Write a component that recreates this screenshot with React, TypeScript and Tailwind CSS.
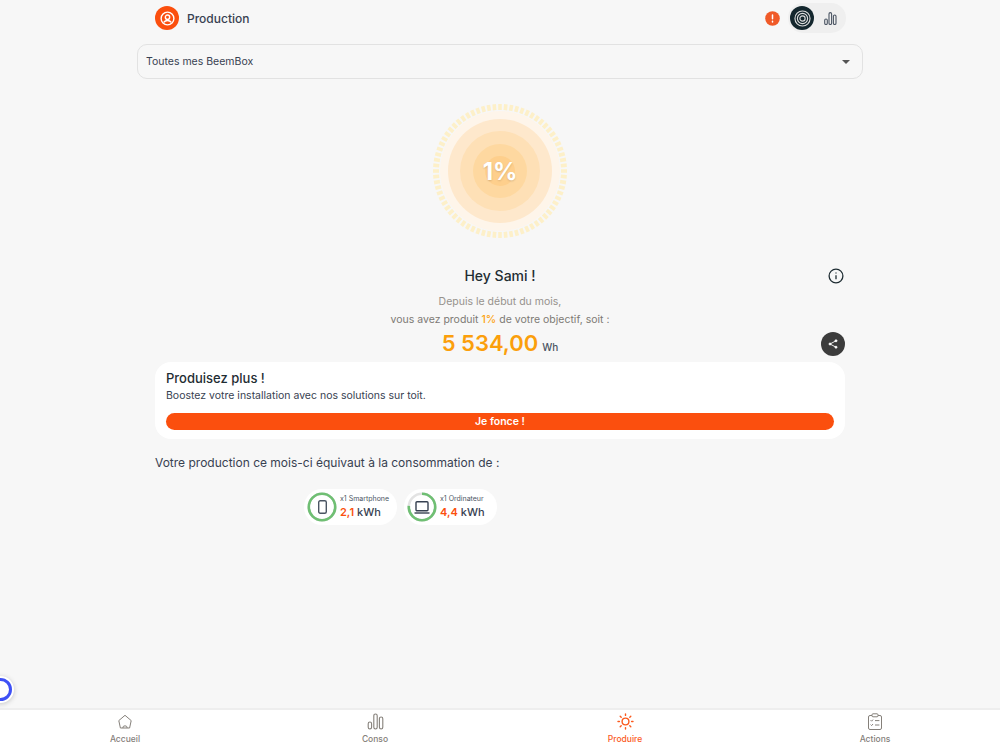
import React from "react";

const ticks = Array.from({ length: 72 }, (_, i) => (i * 360) / 72);

const Gauge = () => {
  return (
    <svg width="136" height="136" viewBox="0 0 136 136" className="block">
      {ticks.map((a) => (
        <rect key={a} x="66.2" y="1" width="3.6" height="6" fill="#fdf0c9" transform={`rotate(${a} 68 68)`} />
      ))}
      <circle cx="68" cy="68" r="60" fill="#fef5ea" />
      <circle cx="68" cy="68" r="52" fill="#fee8cc" />
      <circle cx="68" cy="68" r="40" fill="#fee0b6" />
      <circle cx="68" cy="68" r="27" fill="#fed8a0" />
      <circle cx="68" cy="68" r="15" fill="#fecf8c" />
    </svg>
  );
};

const Ring = ({ pct, children }: { pct: number; children: React.ReactNode }) => {
  const c = 2 * Math.PI * 13.2;
  return (
    <div className="relative w-[30px] h-[30px] flex items-center justify-center">
      <svg width="30" height="30" viewBox="0 0 30 30" className="absolute inset-0 -rotate-90">
        <circle cx="15" cy="15" r="13.2" fill="none" stroke="#e3e3e3" strokeWidth="2.6" />
        <circle cx="15" cy="15" r="13.2" fill="none" stroke="#6fbf73" strokeWidth="2.6" strokeDasharray={`${c * pct} ${c}`} />
      </svg>
      {children}
    </div>
  );
};

const Pill = ({ label, value, pct, icon }: any) => {
  return (
    <div className="flex items-center gap-[3px] w-[93px] h-[36px] bg-white rounded-full pl-[3px]">
      <Ring pct={pct}>{icon}</Ring>
      <div className="flex flex-col">
        <span className="text-[7px] leading-[10px] text-[#4b5563]">{label}</span>
        <span className="text-[11px] leading-[16px] font-medium text-[#374151]">
          <span className="text-[#fb4f0e] font-semibold">{value}</span> kWh
        </span>
      </div>
    </div>
  );
};

const navItems = [
  {
    title: "Accueil",
    icon: (
      <svg width="16" height="16" viewBox="0 0 16 16" fill="none" stroke="currentColor" strokeWidth="1">
        <path d="M8 1.3 14.2 6.6 12.6 14H3.4L1.8 6.6Z" strokeLinejoin="round" />
        <path d="M5.8 14a2.2 2.2 0 0 1 4.4 0" />
      </svg>
    ),
  },
  {
    title: "Conso",
    icon: (
      <svg width="17" height="17" viewBox="0 0 17 17" fill="none" stroke="currentColor" strokeWidth="1.1">
        <rect x="1.2" y="9" width="3.4" height="7" rx="1.7" />
        <rect x="6.8" y="1" width="3.4" height="15" rx="1.7" />
        <rect x="12.4" y="4" width="3.4" height="12" rx="1.7" />
      </svg>
    ),
  },
  {
    title: "Produire",
    active: true,
    icon: (
      <svg width="17" height="17" viewBox="0 0 17 17" fill="none" stroke="currentColor" strokeWidth="1.4" strokeLinecap="round">
        <circle cx="8.5" cy="8.5" r="3.4" />
        <path d="M8.5 1v1.4M8.5 14.6V16M1 8.5h1.4M14.6 8.5H16M3.2 3.2l1 1M12.8 12.8l1 1M3.2 13.8l1-1M12.8 4.2l1-1" />
      </svg>
    ),
  },
  {
    title: "Actions",
    icon: (
      <svg width="16" height="17" viewBox="0 0 16 17" fill="none" stroke="currentColor" strokeWidth="1">
        <rect x="1.5" y="2.5" width="13" height="14" rx="1.5" />
        <rect x="5" y="0.8" width="6" height="3" rx="1" fill="#fff" />
        <path d="M3.6 7.2l1 1 1.4-1.6M8 7.6h4.4M3.6 11.6l1 1 1.4-1.6M8 12h4.4" />
      </svg>
    ),
  },
];

const BottomNav = () => {
  return (
    <div className="grid grid-cols-4 h-[42px] bg-white border-t-2 border-[#eeeeee]">
      {navItems.map((item, i) => {
        return (
          <div key={i} className={`flex flex-col items-center pt-[3px] ${item.active ? "text-[#fb5a1e]" : "text-[#85807a]"}`}>
            <div className="h-[17px] flex items-center">{item.icon}</div>
            <span className="mt-[3px] text-[8.5px] leading-[12px] font-medium">{item.title}</span>
          </div>
        );
      })}
    </div>
  );
};

export default function App() {
  return (
    <div className="relative h-screen flex flex-col bg-[#f7f7f7] font-['Inter',sans-serif] overflow-hidden">
      <div className="flex-1 w-[726px] mx-auto">
        <div className="flex items-center h-[36px] pl-[18px] pr-[17px]">
          <div className="w-6 h-6 rounded-full bg-[#fb4f0e] flex items-center justify-center">
            <svg width="15" height="15" viewBox="0 0 16 16" fill="none" stroke="#fff" strokeWidth="1.5">
              <circle cx="8" cy="8" r="6.8" />
              <circle cx="8" cy="6.6" r="2.3" />
              <path d="M4 12.2c1-1.5 2.4-2.1 4-2.1s3 .6 4 2.1" />
            </svg>
          </div>
          <h1 className="ml-[8px] mt-[1px] text-[12px] font-medium text-[#374151]">Production</h1>
          <div className="ml-auto flex items-center gap-[8px]">
            <svg width="15" height="15" viewBox="0 0 15 15">
              <circle cx="7.5" cy="7.5" r="7.3" fill="#f05a28" />
              <path d="M7.5 4v3.8M7.5 10.3v.6" stroke="#fff" strokeWidth="1.5" strokeLinecap="round" />
            </svg>
            <div className="flex items-center w-[58px] h-[30px] rounded-full bg-[#efefef] pl-[2px]">
              <div className="w-6 h-6 rounded-full bg-[#14272e] flex items-center justify-center">
                <svg width="17" height="17" viewBox="0 0 18 18" fill="none" stroke="#dcdcdc" strokeWidth="1.2">
                  <circle cx="9" cy="9" r="8" />
                  <circle cx="9" cy="9" r="5.4" />
                  <circle cx="9" cy="9" r="2.8" />
                </svg>
              </div>
              <svg width="13" height="13" viewBox="0 0 13 13" fill="none" stroke="#4b5563" strokeWidth="1.1" className="ml-[10px]">
                <rect x="0.7" y="7" width="2.6" height="5.5" rx="1.3" />
                <rect x="5" y="0.6" width="2.6" height="11.9" rx="1.3" />
                <rect x="9.4" y="3" width="2.6" height="9.5" rx="1.3" />
              </svg>
            </div>
          </div>
        </div>

        <div className="mt-[8px] h-[35px] flex items-center justify-between px-2 border border-[#e2e2e2] rounded-[10px]">
          <span className="text-[10.5px] text-[#374151]">Toutes mes BeemBox</span>
          <div className="mr-[4px] w-0 h-0 border-x-[4px] border-x-transparent border-t-[4px] border-t-[#555555]" />
        </div>

        <div className="mt-[24px] relative w-[136px] h-[136px] mx-auto flex items-center justify-center">
          <Gauge />
          <span className="absolute mt-[2px] text-[24px] font-bold text-white [text-shadow:0_1px_2px_rgba(0,0,0,0.15)]">1%</span>
        </div>

        <div className="px-[18px]">
          <div className="relative mt-[27px] text-center">
            <p className="text-[14px] leading-[20px] font-medium text-[#1f2d33]">Hey Sami !</p>
            <svg width="16" height="16" viewBox="0 0 16 16" fill="none" stroke="#1f2d33" strokeWidth="1.3" className="absolute right-[1px] top-[2px]">
              <circle cx="8" cy="8" r="6.9" />
              <path d="M8 7.2v4M8 4.6v.9" />
            </svg>
          </div>
          <p className="mt-[7px] text-center text-[10.5px] leading-[17px] text-[#96928d]">Depuis le début du mois,</p>
          <p className="mt-[1px] text-center text-[10.5px] leading-[17px] text-[#7d7a75]">
            vous avez produit <span className="text-[#fca311] font-medium">1%</span> de votre objectif, soit :
          </p>
          <div className="relative h-[33px] flex items-baseline justify-center">
            <span className="text-[22px] leading-[30px] font-semibold text-[#fb9f0c]">5 534,00</span>
            <span className="ml-[4px] text-[10px] font-medium text-[#4b5563]">Wh</span>
            <div className="absolute right-0 top-[4px] w-6 h-6 rounded-full bg-[#3c3c3c] flex items-center justify-center">
              <svg width="10" height="10" viewBox="0 0 10 10" fill="#fff" stroke="#fff" strokeWidth="0.9">
                <path d="M8 1.8 2 5l6 3.2" fill="none" />
                <circle cx="8" cy="1.8" r="1" />
                <circle cx="2" cy="5" r="1" />
                <circle cx="8" cy="8.2" r="1" />
              </svg>
            </div>
          </div>

          <div className="mt-[1px] h-[77px] bg-white rounded-2xl px-[11px] pt-[7px]">
            <p className="text-[13px] leading-[19px] font-medium text-[#1f2d33]">Produisez plus !</p>
            <p className="text-[10.5px] leading-[16px] text-[#374151]">Boostez votre installation avec nos solutions sur toit.</p>
            <div className="mt-[9px] h-[17px] rounded-full bg-[#fb4f0e] flex items-center justify-center text-[10.5px] font-semibold text-white">Je fonce !</div>
          </div>

          <p className="mt-[16px] text-[12px] leading-[16px] text-[#374151]">Votre production ce mois-ci équivaut à la consommation de :</p>

          <div className="mt-[18px] flex justify-center gap-[7px] pr-[199px]">
            <Pill
              label="x1 Smartphone"
              value="2,1"
              pct={1}
              icon={
                <svg width="9" height="14" viewBox="0 0 9 14" fill="none" stroke="#4b5563" strokeWidth="1.4">
                  <rect x="0.7" y="0.7" width="7.6" height="12.6" rx="1.5" />
                </svg>
              }
            />
            <Pill
              label="x1 Ordinateur"
              value="4,4"
              pct={0.76}
              icon={
                <svg width="16" height="13" viewBox="0 0 16 13" fill="none" stroke="#374151" strokeWidth="1.4">
                  <rect x="2" y="0.8" width="12" height="9" rx="1" />
                  <path d="M0.5 12h15" />
                </svg>
              }
            />
          </div>
        </div>
      </div>

      <BottomNav />

      {/* floating bubble, half off screen */}
      <div className="absolute left-[-11px] top-[678px] w-[23px] h-[23px] rounded-full bg-white border-[3px] border-[#3f51f5] shadow-[0_0_0_2px_#fff,0_1px_5px_2px_rgba(0,0,0,0.2)]" />
    </div>
  );
}
